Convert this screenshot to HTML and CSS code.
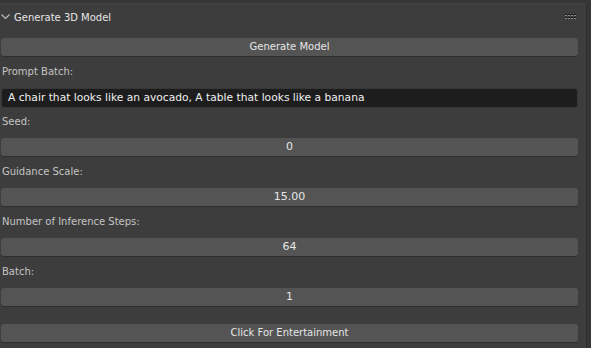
FILE: index.html
```html
<!DOCTYPE html>
<html lang="en">
<head>
    <meta charset="UTF-8">
    <meta name="viewport" content="width=device-width, initial-scale=1.0">
    <title>Generate 3D Model</title>
    <link rel="stylesheet" href="styles.css">
</head>
<body>
    <div class="region">
        <div class="panel">
            <div class="panel-header">
                <svg class="chevron" width="9" height="6" viewBox="0 0 9 6">
                    <path d="M0.5 0.5 L4.5 4.5 L8.5 0.5" fill="none" stroke="#bdbdbd" stroke-width="1.1"/>
                </svg>
                <span class="panel-title">Generate 3D Model</span>
                <svg class="grip" width="11" height="6" viewBox="0 0 11 6">
                    <rect x="0" y="0" width="2" height="2" fill="#1a1a1a"/>
                    <rect x="3" y="0" width="2" height="2" fill="#1a1a1a"/>
                    <rect x="6" y="0" width="2" height="2" fill="#1a1a1a"/>
                    <rect x="9" y="0" width="2" height="2" fill="#1a1a1a"/>
                    <rect x="0" y="3" width="2" height="2" fill="#1a1a1a"/>
                    <rect x="3" y="3" width="2" height="2" fill="#1a1a1a"/>
                    <rect x="6" y="3" width="2" height="2" fill="#1a1a1a"/>
                    <rect x="9" y="3" width="2" height="2" fill="#1a1a1a"/>
                    <rect x="0" y="1" width="2" height="1" fill="#8a8a8a"/>
                    <rect x="3" y="1" width="2" height="1" fill="#8a8a8a"/>
                    <rect x="6" y="1" width="2" height="1" fill="#8a8a8a"/>
                    <rect x="9" y="1" width="2" height="1" fill="#8a8a8a"/>
                    <rect x="0" y="4" width="2" height="1" fill="#8a8a8a"/>
                    <rect x="3" y="4" width="2" height="1" fill="#8a8a8a"/>
                    <rect x="6" y="4" width="2" height="1" fill="#8a8a8a"/>
                    <rect x="9" y="4" width="2" height="1" fill="#8a8a8a"/>
                </svg>
            </div>
            <div class="panel-body">
                <button class="btn">Generate Model</button>

                <div class="label">Prompt Batch:</div>
                <div class="text-field">A chair that looks like an avocado, A table that looks like a banana</div>

                <div class="label">Seed:</div>
                <div class="num-field">0</div>

                <div class="label">Guidance Scale:</div>
                <div class="num-field">15.00</div>

                <div class="label">Number of Inference Steps:</div>
                <div class="num-field">64</div>

                <div class="label">Batch:</div>
                <div class="num-field">1</div>

                <button class="btn btn-last">Click For Entertainment</button>
            </div>
        </div>
    </div>
</body>
</html>
```

FILE: styles.css
```css
* {
    margin: 0;
    padding: 0;
    box-sizing: border-box;
    font-family: "DejaVu Sans", sans-serif;
}

body {
    background: #363636;
    width: 591px;
    height: 348px;
    overflow: hidden;
}

.region {
    padding-top: 3px;
    height: 348px;
}

.panel {
    width: 587px;
    height: 345px;
    background: #3d3d3d;
    border-top: 1px solid #424242;
    border-right: 1px solid #2f2f2f;
}

.panel-header {
    display: flex;
    align-items: center;
    height: 26px;
    padding-left: 1px;
    padding-right: 8px;
}

.chevron {
    margin-right: 4px;
}

.panel-title {
    flex: 1;
    color: #e6e6e6;
    font-size: 10px;
}

.grip {
    margin-right: 2px;
}

.panel-body {
    display: flex;
    flex-direction: column;
    padding: 8px 8px 0 1px;
}

.btn,
.num-field {
    height: 18px;
    width: 577px;
    background: #545454;
    border: none;
    border-radius: 3px;
    box-shadow: 0 1px 0 #2e2e2e;
    color: #e6e6e6;
    font-size: 10px;
    text-align: center;
    line-height: 18px;
}

.num-field {
    font-size: 11px;
}

.btn-last {
    margin-top: 18px;
}

.label {
    height: 32px;
    line-height: 32px;
    color: #c4c4c4;
    font-size: 10px;
    padding-left: 1px;
}

.text-field {
    height: 20px;
    width: 577px;
    background: #1d1d1d;
    border: 1px solid #373737;
    border-radius: 3px;
    color: #f0f0f0;
    font-size: 10.7px;
    line-height: 18px;
    padding-left: 6px;
    margin-bottom: -2px;
}
```
